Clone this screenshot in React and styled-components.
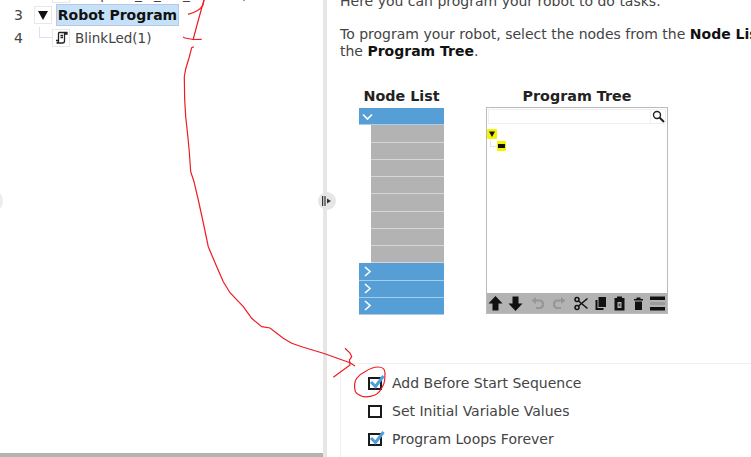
import React from "react";
import styled, {createGlobalStyle} from "styled-components";

const GlobalStyle = createGlobalStyle`
  html, body {
    margin: 0;
    height: 100%;
    overflow: hidden;
    background: #fff;
  }
  #root {
    height: 100%;
  }
`;

const Page = styled.div`
  position: relative;
  display: flex;
  width: 751px;
  height: 457px;
  overflow: hidden;
  font-family: "DejaVu Sans", sans-serif;
  font-size: 14px;
  color: #444;
`;

const LeftPane = styled.div`
  width: 323px;
  flex: none;
  display: flex;
  flex-direction: column;
  justify-content: space-between;
  border-bottom: 4px solid #b3b3b3;
  box-sizing: border-box;
`;

const Tree = styled.div`
  display: flex;
  flex-direction: column;
  margin-top: -16px;
`;

const TreeRow = styled.div`
  display: flex;
  align-items: center;
  height: 23px;

  &:first-child {
    height: 19px;
  }
`;

const LineNumber = styled.span`
  width: 34px;
  flex: none;
  padding-left: 14px;
  box-sizing: border-box;
  font-size: 14px;
`;

const NodeIndent = styled.span`
  position: relative;
  width: 18px;
  height: 18px;
  flex: none;
`;

const Connector = styled.span`
  position: absolute;
  left: 5px;
  top: -2px;
  width: 13px;
  height: 11px;
  border-left: 1px solid #dde0f5;
  border-bottom: 1px solid #dde0f5;
  box-sizing: border-box;
`;

const NodeIcon = styled.span`
  display: flex;
  align-items: center;
  justify-content: center;
  width: 18px;
  height: 18px;
  flex: none;
  box-sizing: border-box;
  border: 1px solid #e8e8e8;
  background: #fff;
`;

const NodeLabel = styled.span`
  margin-left: 5px;
  white-space: nowrap;
  font-size: 13.5px;
  color: #444;
`;

const SelectedLabel = styled.span`
  margin-left: 4px;
  height: 22px;
  width: 123px;
  display: flex;
  align-items: center;
  justify-content: center;
  box-sizing: border-box;
  border: 1px solid #b9c6e6;
  background: #c5e1f8;
  color: #111;
  font-weight: bold;
  white-space: nowrap;
`;

const Divider = styled.div`
  width: 4px;
  flex: none;
  background: #e6e6e6;
`;

const Handle = styled.div`
  position: absolute;
  left: 318px;
  top: 192px;
  width: 18px;
  height: 18px;
  border-radius: 50%;
  background: #e6e6e6;
  display: flex;
  align-items: center;
  justify-content: center;
`;

const EdgeHandle = styled.div`
  position: absolute;
  left: -9px;
  top: 192px;
  width: 12px;
  height: 18px;
  border-radius: 50%;
  background: #ececec;
`;

const RightPane = styled.div`
  flex: 1;
  min-width: 0;
  padding-left: 13px;
  display: flex;
  flex-direction: column;
  overflow: hidden;
`;

const Intro = styled.p`
  margin: -7px 0 0;
  width: 440px;
  line-height: 17px;
  white-space: nowrap;
`;

const IntroGap = styled.p`
  margin: 16px 0 0;
  width: 440px;
  line-height: 17px;
  white-space: nowrap;

  b {
    color: #111;
  }
`;

const Diagram = styled.div`
  display: flex;
  gap: 42px;
  margin: 26px 0 0 19px;
`;

const Column = styled.div`
  display: flex;
  flex-direction: column;
  align-items: center;
`;

const ColumnTitle = styled.div`
  height: 21px;
  line-height: 20px;
  font-weight: bold;
  font-size: 14.3px;
  color: #222;
  white-space: nowrap;
`;

const NodeList = styled.div`
  width: 85px;
  height: 206px;
  display: grid;
  grid-template-rows: repeat(12, 1fr);
  gap: 1px;
  margin-top: 1px;
`;

const BlueBar = styled.div`
  background: #569fd6;
  box-shadow: 0 1px 0 #a9cde9;
  display: flex;
  align-items: center;
  padding-left: 3px;
`;

const GreyBar = styled.div`
  background: #b3b3b3;
  box-shadow: 0 1px 0 #d6d6d6;
  margin-left: 12px;
`;

const ProgramTree = styled.div`
  width: 182px;
  height: 207px;
  box-sizing: border-box;
  border: 1px solid #bbb;
  display: flex;
  flex-direction: column;
`;

const SearchRow = styled.div`
  display: flex;
  height: 15px;
  margin: 1px 1px 0;
  border: 1px solid #f0f0f0;
  box-sizing: border-box;
  justify-content: flex-end;
`;

const SearchButton = styled.span`
  width: 14px;
  display: flex;
  align-items: center;
  justify-content: center;
  border-left: 1px solid #eee;
`;

const TreeBody = styled.div`
  flex: 1;
  position: relative;
`;

const YellowKey = styled.span`
  position: absolute;
  left: ${(p) => p.$left}px;
  top: ${(p) => p.$top}px;
  width: ${(p) => p.$w}px;
  height: ${(p) => p.$h}px;
  background: #f4f400;
  border-radius: 1px;
  display: flex;
  align-items: center;
  justify-content: center;
`;

const TreeLine = styled.span`
  position: absolute;
  left: 3px;
  top: 16px;
  width: 7px;
  height: 6px;
  border-left: 1px solid #e2e4f5;
  border-bottom: 1px solid #e2e4f5;
`;

const Toolbar = styled.div`
  height: 20px;
  background: #b3b3b3;
  display: flex;
  align-items: center;
  gap: 6px;
`;

const ToolGroup = styled.div`
  display: flex;
  align-items: center;
  gap: ${(p) => p.$gap}px;
`;

const Options = styled.div`
  margin-top: auto;
  height: 94px;
  border-top: 1px solid #f0f0f0;
  border-left: 1px solid #f0f0f0;
  box-sizing: border-box;
  padding: 5px 0 0 27px;
  display: flex;
  flex-direction: column;
`;

const Option = styled.label`
  display: flex;
  align-items: center;
  height: 28px;
  gap: 10px;
  white-space: nowrap;
`;

const Box = styled.span`
  position: relative;
  width: 14px;
  height: 13px;
  flex: none;
  box-sizing: border-box;
  border: 2px solid #1a1a1a;
  background: #fff;
`;

const CheckMark = styled.svg`
  position: absolute;
  left: -1px;
  top: -5px;
  width: 17px;
  height: 17px;
`;

const Scribble = styled.svg`
  position: absolute;
  left: 0;
  top: 0;
  width: 751px;
  height: 457px;
  pointer-events: none;
  fill: none;
  stroke: #ee1c25;
  stroke-width: 1.2;
`;

const Chevron = ({open}) => (
  <svg width="11" height="11" viewBox="0 0 11 11" fill="none" stroke="#fff" strokeWidth="1.6">
    <path d={open ? "M1 3.5L5.5 8L10 3.5" : "M3 1L8 5.5L3 10"} />
  </svg>
);

const Check = () => (
  <CheckMark viewBox="0 0 17 17" fill="none">
    <path d="M2 8L6.5 12.5L14.5 2" stroke="#4f9fdc" strokeWidth="3" />
  </CheckMark>
);

const ScriptIcon = () => (
  <svg width="13" height="13" viewBox="0 0 13 13" fill="none" stroke="#222" strokeWidth="1.3">
    <path d="M4 1.5H12V3H9.5V10C9.5 11.5 8.5 12 7.5 12H1.5C3 12 3.5 11 3.5 10V3C3.5 2 3.8 1.5 4 1.5Z" />
    <path d="M5.5 4.5H8M5.5 6.5H8M1 9.5H4" />
  </svg>
);

const ToolIcon = ({children}) => (
  <svg width="17" height="17" viewBox="0 0 17 17" fill="#111" stroke="none">
    {children}
  </svg>
);

const moveIcons = [
  <path key="up" d="M8.5 1L15.5 8.5H11.5V15.5H5.5V8.5H1.5Z" />,
  <path key="down" d="M5.5 1.5H11.5V8.5H15.5L8.5 16L1.5 8.5H5.5Z" />,
];

const historyIcons = [
  <g key="undo">
    <path d="M1.5 5.5L6 2V9Z" fill="#969696" />
    <path d="M5 5.5H9.5C14 5.5 14.5 13 9.5 13H6" fill="none" stroke="#969696" strokeWidth="2.2" />
  </g>,
  <g key="redo">
    <path d="M15.5 5.5L11 2V9Z" fill="#969696" />
    <path d="M12 5.5H7.5C3 5.5 2.5 13 7.5 13H11" fill="none" stroke="#969696" strokeWidth="2.2" />
  </g>,
];

const editIcons = [
  <g key="cut" fill="none" stroke="#111" strokeWidth="1.5">
    <circle cx="4" cy="4.5" r="2" />
    <circle cx="4" cy="12.5" r="2" />
    <path d="M5.5 6L14.5 13.5M5.5 11L14.5 3.5" />
  </g>,
  <g key="copy">
    <path d="M6.5 2H14V12H6.5Z" />
    <path d="M3.5 5H5.5V13H11.5V15H3.5Z" />
  </g>,
  <g key="paste">
    <path fillRule="evenodd" d="M3.5 3H6V1.5H11V3H13.5V15.5H3.5ZM6.5 7V13H10.5V7Z" />
    <path d="M7.5 8.5H9.5V11.5H7.5Z" fill="#555" />
  </g>,
  <g key="trash">
    <path d="M4 4H6.5V2.5H10.5V4H13V5.5H4Z" />
    <path d="M5 6.5H12V15H5Z" />
  </g>,
  <g key="split">
    <path d="M1 1.5H16V5H1Z" />
    <path d="M1 12H16V15.5H1Z" />
    <path d="M1 7H16V10H1Z" fill="#9c9c9c" />
  </g>,
];

const optionList = [
  {label: "Add Before Start Sequence", checked: true},
  {label: "Set Initial Variable Values", checked: false},
  {label: "Program Loops Forever", checked: true},
];

const App = () => (
  <Page>
    <GlobalStyle />
    <LeftPane>
      <Tree>
        <TreeRow>
          <LineNumber />
          <NodeIndent />
          <NodeIcon />
          <NodeLabel>Script: io_in_out_number,</NodeLabel>
        </TreeRow>
        <TreeRow>
          <LineNumber>3</LineNumber>
          <NodeIcon>
            <svg width="10" height="10" viewBox="0 0 10 10" fill="#111">
              <path d="M0 1H10L5 10Z" />
            </svg>
          </NodeIcon>
          <SelectedLabel>Robot Program</SelectedLabel>
        </TreeRow>
        <TreeRow>
          <LineNumber>4</LineNumber>
          <NodeIndent>
            <Connector />
          </NodeIndent>
          <NodeIcon>
            <ScriptIcon />
          </NodeIcon>
          <NodeLabel>BlinkLed(1)</NodeLabel>
        </TreeRow>
      </Tree>
    </LeftPane>
    <Divider />
    <RightPane>
      <Intro>Here you can program your robot to do tasks.</Intro>
      <IntroGap>
        To program your robot, select the nodes from the <b>Node List</b>
        <br />
        the <b>Program Tree</b>.
      </IntroGap>
      <Diagram>
        <Column>
          <ColumnTitle>Node List</ColumnTitle>
          <NodeList>
            <BlueBar>
              <Chevron open />
            </BlueBar>
            {Array.from({length: 8}, (_, i) => (
              <GreyBar key={i} />
            ))}
            {[0, 1, 2].map((i) => (
              <BlueBar key={i}>
                <Chevron />
              </BlueBar>
            ))}
          </NodeList>
        </Column>
        <Column>
          <ColumnTitle>Program Tree</ColumnTitle>
          <ProgramTree>
            <SearchRow>
              <SearchButton>
                <svg width="13" height="13" viewBox="0 0 13 13" fill="none" stroke="#222">
                  <circle cx="5" cy="5" r="3.5" strokeWidth="1.4" />
                  <path d="M7.5 7.5L12 12" strokeWidth="2" />
                </svg>
              </SearchButton>
            </SearchRow>
            <TreeBody>
              <YellowKey $left={0} $top={5} $w={10} $h={10}>
                <svg width="6" height="6" viewBox="0 0 6 6" fill="#111">
                  <path d="M0 0.5H6L3 6Z" />
                </svg>
              </YellowKey>
              <TreeLine />
              <YellowKey $left={10} $top={17} $w={9} $h={10}>
                <svg width="7" height="4" viewBox="0 0 7 4" fill="#111">
                  <path d="M0 0H7V4H0Z" />
                </svg>
              </YellowKey>
            </TreeBody>
            <Toolbar>
              <ToolGroup $gap={3}>
                {moveIcons.map((icon) => (
                  <ToolIcon key={icon.key}>{icon}</ToolIcon>
                ))}
              </ToolGroup>
              <ToolGroup $gap={3}>
                {historyIcons.map((icon) => (
                  <ToolIcon key={icon.key}>{icon}</ToolIcon>
                ))}
              </ToolGroup>
              <ToolGroup $gap={2}>
                {editIcons.map((icon) => (
                  <ToolIcon key={icon.key}>{icon}</ToolIcon>
                ))}
              </ToolGroup>
            </Toolbar>
          </ProgramTree>
        </Column>
      </Diagram>
      <Options>
        {optionList.map((opt) => (
          <Option key={opt.label}>
            <Box>{opt.checked && <Check />}</Box>
            {opt.label}
          </Option>
        ))}
      </Options>
    </RightPane>
    <Handle>
      <svg width="10" height="10" viewBox="0 0 10 10" fill="#333">
        <path d="M0 0H1.2V10H0ZM2.4 0H3.6V10H2.4ZM5 2.5L9 5L5 7.5Z" />
      </svg>
    </Handle>
    <EdgeHandle />
    <Scribble viewBox="0 0 751 457">
      <path d="M188 14.3C194 13 200 10 203 5L204 0" />
      <path d="M204 0L201.7 8L197 25L193 40" />
      <path d="M183 37L185 38L193 39.5L201.7 39.3" />
      <path d="M194 46.7L191.7 47.7L189 58L185.7 69L184.3 76.7L184.7 100L185.7 116.7L187.7 135L189.3 151.7L190.7 171.7L194 181.7L198.3 200L202.7 220L208.3 246.7L216 265L223.3 281.7L230 292.7L243.3 306.7L251.7 318.3L261.7 326.7L270 328L283.3 338.3L291.7 343.3L303.3 347.3L323.3 353.3L350 362.7L355 366" />
      <path d="M345 348.3L350 353L351.7 356.7L349.5 360L350 365L333.3 377.3" />
      <path d="M378 367C382 367 385 369 385 373C385 378 385 382 383.3 385C381 390 378 394 375 395C370 397 366 397 363.3 396.7C358 395 355 393 355 390C354 385 355 381 356.7 378.3C359 375 362 373 365 371.7C369 369 374 367 378 367Z" />
    </Scribble>
  </Page>
);

export default App;
